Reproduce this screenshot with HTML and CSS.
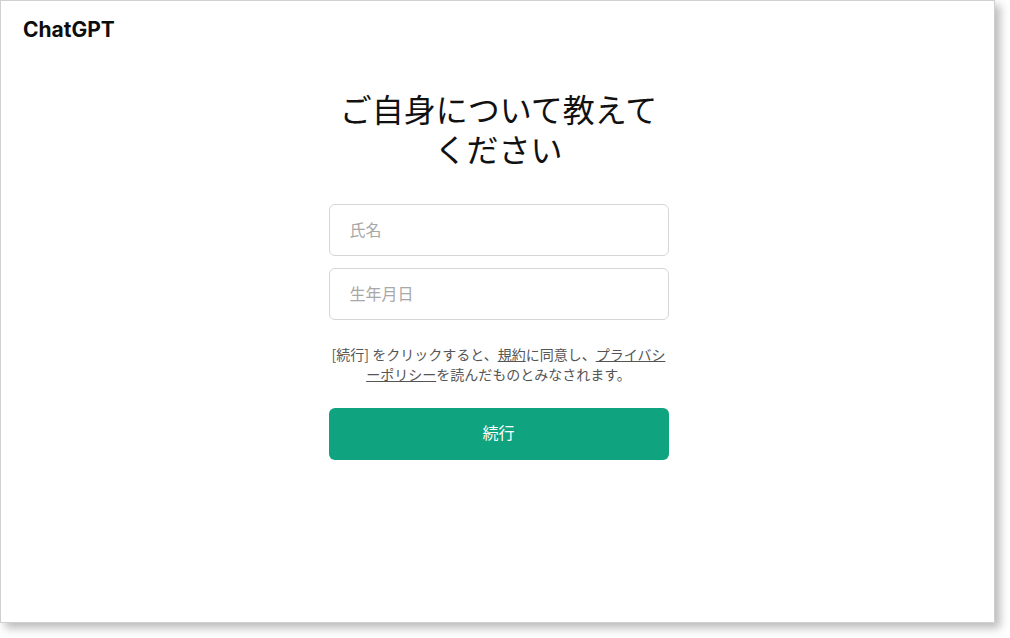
FILE: index.html
```html
<!DOCTYPE html>
<html lang="ja">
<head>
<meta charset="utf-8">
<title>ChatGPT</title>
<link rel="stylesheet" href="styles.css">
</head>
<body>
<div class="window">
  <header class="topbar">
    <div class="logo">ChatGPT</div>
  </header>
  <main class="content">
    <h1 class="title">ご自身について教えてください</h1>
    <form class="form">
      <input class="field" type="text" placeholder="氏名">
      <input class="field" type="text" placeholder="生年月日">
      <p class="terms">[続行] をクリックすると、<a href="#">規約</a>に同意し、<a href="#">プライバシーポリシー</a>を読んだものとみなされます。</p>
      <button class="submit" type="button">続行</button>
    </form>
  </main>
</div>
</body>
</html>
```
FILE: styles.css
```css
html, body {
  margin: 0;
  padding: 0;
  background: #ffffff;
}
body {
  font-family: "Noto Sans CJK JP", "Noto Sans", sans-serif;
  min-height: 638px;
}
.window {
  box-sizing: border-box;
  width: 995px;
  height: 623px;
  border: 1px solid #d0d0d0;
  background: #ffffff;
  box-shadow: 5px 5px 9px rgba(0, 0, 0, 0.28);
  display: flex;
  flex-direction: column;
}
.topbar {
  padding: 15px 22px 0;
  height: 30px;
}
.logo {
  font-family: Inter, "Liberation Sans", sans-serif;
  font-weight: 700;
  font-size: 21px;
  letter-spacing: 0;
  color: #0d0d0d;
  line-height: 28px;
}
.content {
  display: flex;
  flex-direction: column;
  align-items: center;
  padding-left: 2px;
  padding-top: 42px;
}
.title {
  margin: 0;
  width: 340px;
  text-align: center;
  font-size: 32px;
  line-height: 40px;
  font-weight: 400;
  color: #111111;
}
.form {
  width: 340px;
  margin-top: 36px;
  display: flex;
  flex-direction: column;
}
.field {
  box-sizing: border-box;
  height: 52px;
  width: 100%;
  border: 1px solid #d6d6d6;
  border-radius: 6px;
  padding: 0 20px 3px;
  font-family: inherit;
  font-size: 16px;
  color: #333;
  outline: none;
  margin: 0 0 12px;
}
.field::placeholder {
  color: #a8a8a8;
}
.terms {
  margin: 12px 0 24px;
  text-align: center;
  font-size: 14px;
  line-height: 20px;
  color: #555555;
}
.terms a {
  color: #555555;
  text-decoration: underline;
}
.submit {
  height: 52px;
  border: none;
  border-radius: 6px;
  background: #10a37f;
  color: #ffffff;
  font-family: inherit;
  font-size: 16px;
  padding: 0 0 4px;
  cursor: pointer;
}
```
